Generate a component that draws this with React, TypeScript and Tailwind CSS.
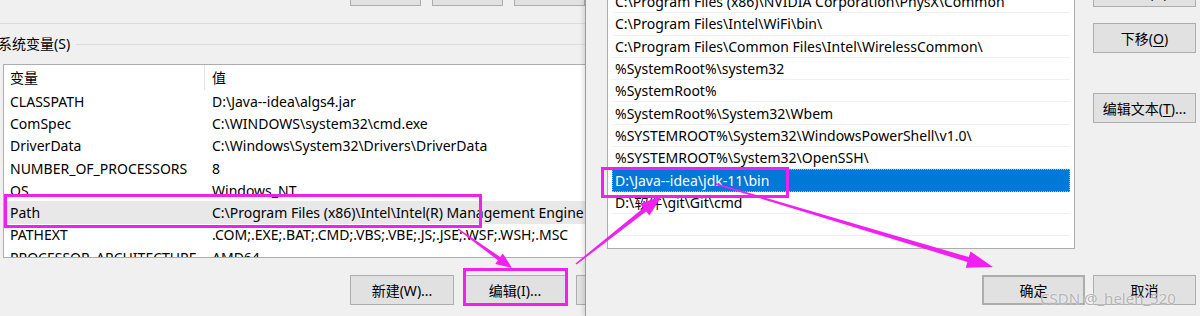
import { FC, ReactNode } from "react";

const font = "font-['Noto_Sans','Noto_Sans_CJK_SC',sans-serif]";

const sysVars: [string, string][] = [
  ["CLASSPATH", "D:\\Java--idea\\algs4.jar"],
  ["ComSpec", "C:\\WINDOWS\\system32\\cmd.exe"],
  ["DriverData", "C:\\Windows\\System32\\Drivers\\DriverData"],
  ["NUMBER_OF_PROCESSORS", "8"],
  ["OS", "Windows_NT"],
  ["Path", "C:\\Program Files (x86)\\Intel\\Intel(R) Management Engine Components\\iCLS\\"],
  ["PATHEXT", ".COM;.EXE;.BAT;.CMD;.VBS;.VBE;.JS;.JSE;.WSF;.WSH;.MSC"],
  ["PROCESSOR_ARCHITECTURE", "AMD64"],
];

const pathItems = [
  "C:\\Program Files (x86)\\NVIDIA Corporation\\PhysX\\Common",
  "C:\\Program Files\\Intel\\WiFi\\bin\\",
  "C:\\Program Files\\Common Files\\Intel\\WirelessCommon\\",
  "%SystemRoot%\\system32",
  "%SystemRoot%",
  "%SystemRoot%\\System32\\Wbem",
  "%SYSTEMROOT%\\System32\\WindowsPowerShell\\v1.0\\",
  "%SYSTEMROOT%\\System32\\OpenSSH\\",
  "D:\\Java--idea\\jdk-11\\bin",
  "D:\\软件\\git\\Git\\cmd",
  "",
];

const WinButton: FC<{ children?: ReactNode; className?: string }> = ({ children, className = "" }) => (
  <div
    className={`flex items-center justify-center h-[30px] border border-[#adadad] bg-[#e1e1e1] text-[14px] text-black shrink-0 ${className}`}
  >
    {children}
  </div>
);

// tapered arrow: thin tail, wide neck, triangle head
const arrowPoints = (x1: number, y1: number, x2: number, y2: number, w0: number, w1: number, L: number, H: number) => {
  const dx = x2 - x1;
  const dy = y2 - y1;
  const len = Math.hypot(dx, dy);
  const ux = dx / len;
  const uy = dy / len;
  const nx = -uy;
  const ny = ux;
  const bx = x2 - ux * L;
  const by = y2 - uy * L;
  const p = (x: number, y: number) => `${x.toFixed(1)},${y.toFixed(1)}`;
  return [
    p(x1 + (nx * w0) / 2, y1 + (ny * w0) / 2),
    p(bx + (nx * w1) / 2, by + (ny * w1) / 2),
    p(bx + (nx * H) / 2, by + (ny * H) / 2),
    p(x2, y2),
    p(bx - (nx * H) / 2, by - (ny * H) / 2),
    p(bx - (nx * w1) / 2, by - (ny * w1) / 2),
    p(x1 - (nx * w0) / 2, y1 - (ny * w0) / 2),
  ].join(" ");
};

const Annotations: FC = () => (
  <svg className="absolute inset-0 z-20 pointer-events-none" width="1200" height="316" viewBox="0 0 1200 316">
    <g fill="none" stroke="#f020f0" strokeWidth="3">
      <rect x="5.5" y="195.5" width="475" height="31" />
      <rect x="464.5" y="269.5" width="102" height="35" />
      <rect x="602.5" y="168.5" width="185" height="28" />
    </g>
    <g fill="#f020f0">
      <polygon points={arrowPoints(458, 229, 512, 268, 1, 4, 16, 13)} />
      <polygon points={arrowPoints(576, 264, 662, 196, 1.5, 4.5, 22, 15)} />
      <polygon points={arrowPoints(716, 184, 993, 267, 1.5, 5, 26, 17)} />
    </g>
  </svg>
);

const LeftPanel: FC = () => (
  <div className="w-[585px] h-[316px] shrink-0 flex flex-col overflow-hidden">
    <div className="h-[23px] flex gap-[11px] pl-[350px] shrink-0">
      <div className="w-[102px] h-[6px] border border-t-0 border-[#adadad] bg-[#e1e1e1]" />
      <div className="w-[102px] h-[6px] border border-t-0 border-[#adadad] bg-[#e1e1e1]" />
      <div className="w-[102px] h-[6px] border border-t-0 border-[#adadad] bg-[#e1e1e1]" />
    </div>
    <div className="h-px bg-[#dcdcdc] shrink-0" />
    <div className="flex items-center h-[16px] mt-[12px] shrink-0">
      <span className="text-[14px] leading-none text-black -ml-[2px] whitespace-nowrap">系统变量(S)</span>
      <div className="flex-1 h-px bg-[#dcdcdc] ml-[6px]" />
    </div>
    <div className="ml-[3px] mt-[12px] h-[194px] w-[600px] shrink-0 border border-[#adadad] bg-white overflow-hidden">
      <div className="flex h-[25px] items-center text-[14px] text-black">
        <div className="w-[201px] h-full pl-[6px] flex items-center border-r border-[#e5e5e5]">变量</div>
        <div className="pl-[7px]">值</div>
      </div>
      {sysVars.map(([name, value]) => (
        <div
          key={name}
          className={`flex h-[22.3px] items-center text-[14px] text-black whitespace-nowrap ${
            name === "Path" ? "bg-[#e8e8e8]" : ""
          }`}
        >
          <div className="w-[202px] pl-[6px] shrink-0">{name}</div>
          <div className="pl-[6px]">{value}</div>
        </div>
      ))}
    </div>
    <div className="flex gap-[10px] pl-[350px] mt-[17px]">
      <WinButton className="w-[104px]">新建(W)...</WinButton>
      <WinButton className="w-[102px]">编辑(I)...</WinButton>
      <WinButton className="w-[102px]" />
    </div>
  </div>
);

const RightPanel: FC = () => (
  <div className="flex-1 h-[316px] flex flex-col border-l border-[#9c9c9c] shadow-[-2px_0_4px_rgba(0,0,0,0.12)] bg-[#f0f0f0] z-10">
    <div className="flex h-[249px] shrink-0">
      <div className="ml-[21px] w-[468px] h-full border-x border-b border-[#adadad] bg-white overflow-hidden px-[4px]">
        <div className="-mt-[9px]">
          {pathItems.map((item, i) => {
            const selected = i === 8;
            return (
              <div
                key={i}
                className={`h-[22.3px] flex items-center pl-[3px] text-[14px] whitespace-nowrap border-b ${
                  selected
                    ? "bg-[#0078d7] text-white border-[#0078d7] outline-1 outline-dotted outline-[#e9a56a] -outline-offset-1"
                    : "text-black border-[#f0f0f0]"
                }`}
              >
                {item}
              </div>
            );
          })}
        </div>
      </div>
      <div className="ml-[18px] w-[103px] flex flex-col">
        <WinButton className="w-[103px] -mt-[23px]">上移(U)</WinButton>
        <WinButton className="w-[103px] mt-[16px]">
          下移(<span className="underline underline-offset-2">O</span>)
        </WinButton>
        <WinButton className="w-[103px] mt-[40px]">
          编辑文本(<span className="underline underline-offset-2">T</span>)...
        </WinButton>
      </div>
    </div>
    <div className="flex justify-end gap-[8px] pr-[4px] mt-[26px]">
      <WinButton className="w-[103px] border-2 border-[#0078d7]">确定</WinButton>
      <WinButton className="w-[103px]">取消</WinButton>
    </div>
  </div>
);

export default function App() {
  return (
    <div className={`relative w-[1200px] h-[316px] bg-[#f0f0f0] overflow-hidden flex ${font}`}>
      <LeftPanel />
      <RightPanel />
      <Annotations />
      <span className="absolute z-30 left-[1040px] top-[291px] text-[15px] leading-none text-[#b4b4b4] [text-shadow:0_0_2px_#fff] whitespace-nowrap">
        CSDN @_helen_520
      </span>
    </div>
  );
}
